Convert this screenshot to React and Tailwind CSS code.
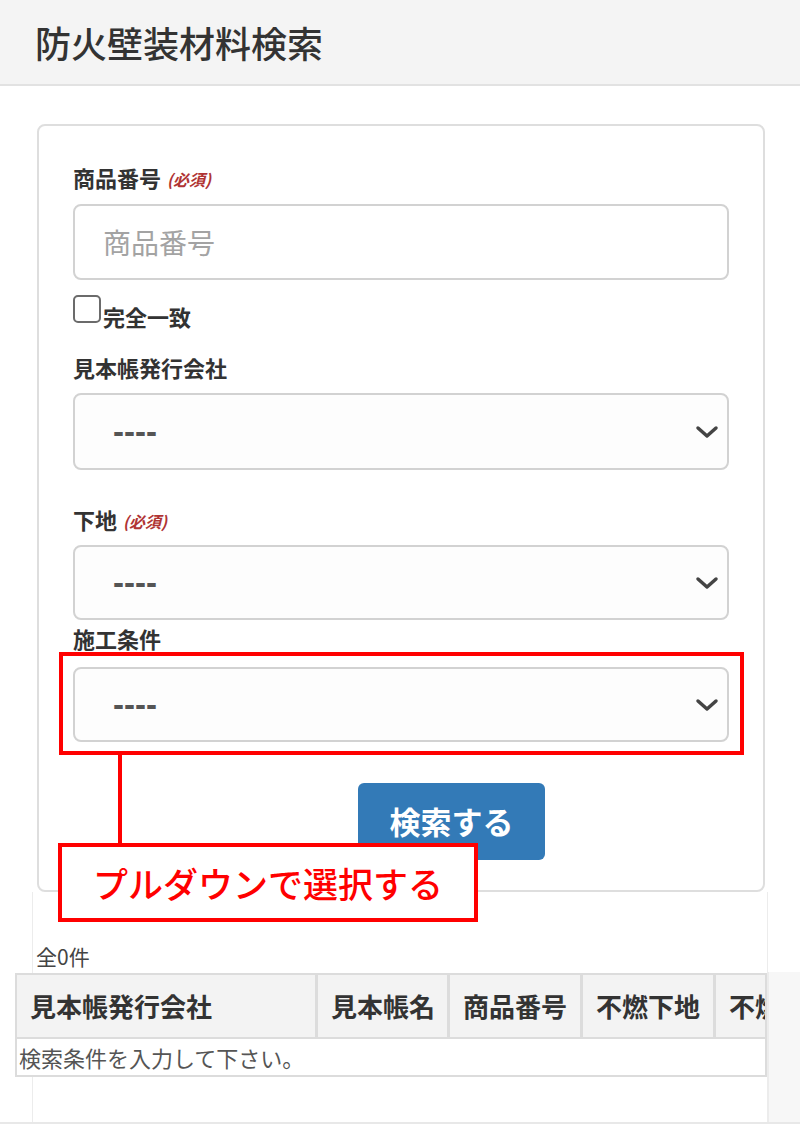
import React from 'react';

const Chevron = () => (
  <svg width="24" height="14" viewBox="0 0 24 14" className="shrink-0">
    <polyline points="3,3 12,11 21,3" fill="none" stroke="#444" strokeWidth="3.5" strokeLinecap="round" strokeLinejoin="round" />
  </svg>
);

const Required = () => (
  <span className="ml-[6px] mt-[4px] text-[16px] font-bold italic text-[#b03434]">(必須)</span>
);

const SelectBox = ({ h = 'h-[76px]' }) => (
  <div className={`${h} border-2 border-[#d2d2d2] rounded-[8px] bg-[#fdfdfd] flex items-center justify-between pl-[38px] pr-[8px]`}>
    <span className="font-['Liberation_Sans',sans-serif] text-[33px] font-bold text-[#555] leading-none">----</span>
    <Chevron />
  </div>
);

const columns = [
  { label: '見本帳発行会社', w: 'w-[298px]' },
  { label: '見本帳名', w: 'w-[132px]' },
  { label: '商品番号', w: 'w-[133px]' },
  { label: '不燃下地', w: 'w-[133px]' },
  { label: '不燃認定', w: 'w-[133px]' },
];

export default function App() {
  return (
    <div className="relative w-[800px] h-[1130px] bg-white overflow-hidden font-['Noto_Sans_CJK_JP',sans-serif] text-[#333]">
      <header className="h-[86px] bg-[#f4f4f4] border-b-2 border-[#e2e2e2] flex items-center pl-[35px]">
        <h1 className="text-[36px] leading-none font-medium text-[#333] -mt-[1px]">防火壁装材料検索</h1>
      </header>

      {/* search form */}
      <div className="ml-[37px] mt-[38px] w-[728px] h-[768px] border-2 border-[#dedede] rounded-[8px] px-[34px] pt-[36px]">
        <div className="h-[30px] flex items-center text-[22px] font-bold leading-none">
          商品番号<Required />
        </div>
        <div className="mt-[12px] h-[76px] border-2 border-[#d2d2d2] rounded-[8px] flex items-center pl-[28px]">
          <span className="text-[28px] text-[#a3a3a3] leading-none">商品番号</span>
        </div>
        <div className="mt-[15px] h-[28px] flex items-end">
          <div className="w-[28px] h-[28px] border-2 border-[#6b6b6b] rounded-[5px] bg-white" />
          <span className="ml-[2px] text-[22px] font-bold leading-none translate-y-[4px]">完全一致</span>
        </div>

        <div className="mt-[29px] h-[30px] flex items-center text-[22px] font-bold leading-none">見本帳発行会社</div>
        <div className="mt-[11px]">
          <SelectBox h="h-[77px]" />
        </div>

        <div className="mt-[34px] h-[30px] flex items-center text-[22px] font-bold leading-none">
          下地<Required />
        </div>
        <div className="mt-[11px]">
          <SelectBox h="h-[75px]" />
        </div>

        <div className="mt-[3px] h-[30px] flex items-center text-[22px] font-bold leading-none">施工条件</div>
        <div className="relative mt-[14px]">
          <SelectBox h="h-[75px]" />
          <div className="absolute -left-[14px] -right-[15px] -top-[15px] -bottom-[13px] border-4 border-[#ff0000]" />
        </div>

        <button className="mt-[41px] ml-[285px] w-[187px] h-[77px] rounded-[6px] bg-[#337ab7] text-white text-[31px] font-bold leading-none pb-[2px]">
          検索する
        </button>
      </div>

      {/* results */}
      <div className="flex border-b-2 border-[#e8e8e8] h-[232px]">
        <div className="ml-[32px] w-[736px] border-l border-r border-[#ececec] relative">
          <div className="mt-[49px] ml-[3px] h-[30px] flex items-center text-[21px] text-[#444] leading-none">全0件</div>
          <div className="mt-[2px] -ml-[18px] w-[752px] border-2 border-[#dcdcdc] overflow-hidden">
            <div className="flex w-max bg-[#f3f3f3]">
              {columns.map((c, i) => (
                <div
                  key={c.label}
                  className={`${c.w} shrink-0 h-[62px] flex items-center pl-[13px] text-[26px] font-bold text-[#333] leading-none whitespace-nowrap ${i > 0 ? 'border-l-[3px] border-[#dcdcdc]' : ''}`}
                >
                  {c.label}
                </div>
              ))}
            </div>
            <div className="h-[38px] border-t-2 border-[#dcdcdc] bg-white flex items-center pl-[2px] text-[22px] text-[#555] leading-none">
              検索条件を入力して下さい。
            </div>
          </div>
        </div>
        <div className="flex-1 mt-[80px] bg-[#f7f7f7] border-l border-[#ececec]" />
      </div>

      {/* annotation */}
      <div className="absolute left-[118px] top-[755px] w-[4px] h-[90px] bg-[#ff0000]" />
      <div className="absolute left-[58px] top-[843px] w-[420px] h-[79px] border-4 border-[#ff0000] bg-white flex items-center justify-center">
        <span className="text-[35px] font-medium text-[#ff0000] leading-none">プルダウンで選択する</span>
      </div>
    </div>
  );
}
